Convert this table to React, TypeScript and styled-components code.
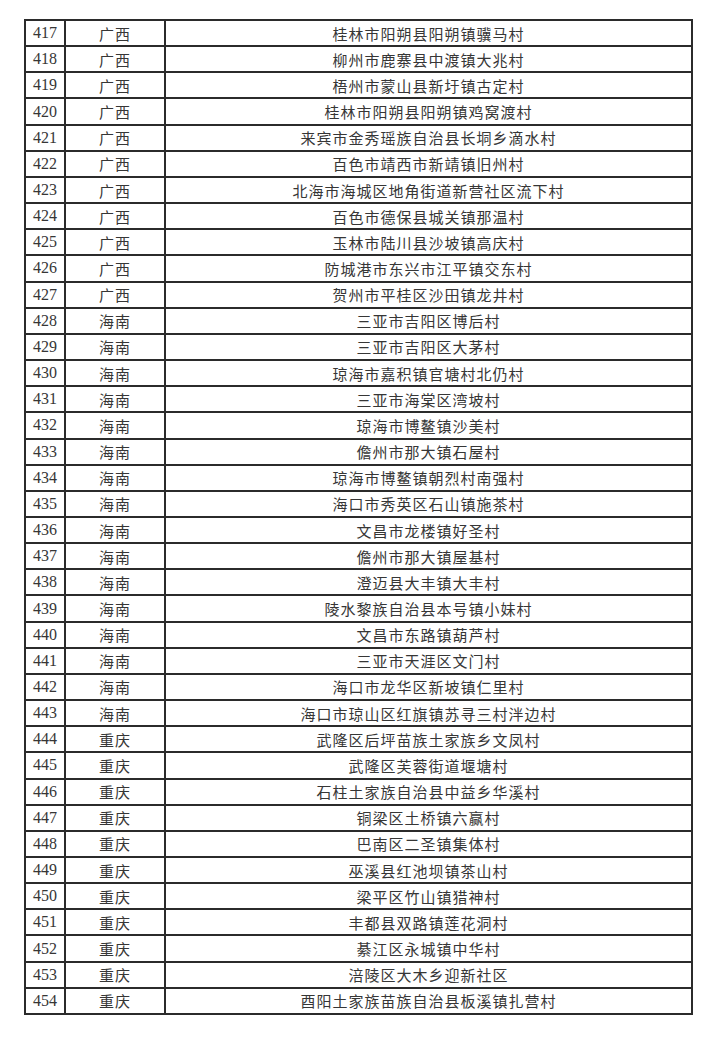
import { createGlobalStyle, styled } from "styled-components";

const GlobalStyle = createGlobalStyle`
  html, body {
    margin: 0;
    padding: 0;
    background: #fff;
  }
`;

const Page = styled.div`
  padding: 19px 0 0 24px;
  width: 720px;
  height: 1039px;
  box-sizing: border-box;
`;

const Table = styled.table`
  border-collapse: collapse;
  border: 2px solid #2b2b2b;
  table-layout: fixed;
  width: 669px;
  height: 996px;
  color: #363636;
`;

const Cell = styled.td<{ $serif?: boolean }>`
  border: 2px solid #2b2b2b;
  padding: 0;
  height: 24px;
  text-align: center;
  vertical-align: middle;
  font-family: ${(p) =>
    p.$serif
      ? `"Liberation Serif", "Noto Sans CJK SC", serif`
      : `"Noto Sans CJK SC", sans-serif`};
  font-size: ${(p) => (p.$serif ? "16px" : "15px")};
  letter-spacing: ${(p) => (p.$serif ? "0" : "1px")};
  line-height: 1;
`;

const rows: [number, string, string][] = [
  [417, "广西", "桂林市阳朔县阳朔镇骥马村"],
  [418, "广西", "柳州市鹿寨县中渡镇大兆村"],
  [419, "广西", "梧州市蒙山县新圩镇古定村"],
  [420, "广西", "桂林市阳朔县阳朔镇鸡窝渡村"],
  [421, "广西", "来宾市金秀瑶族自治县长垌乡滴水村"],
  [422, "广西", "百色市靖西市新靖镇旧州村"],
  [423, "广西", "北海市海城区地角街道新营社区流下村"],
  [424, "广西", "百色市德保县城关镇那温村"],
  [425, "广西", "玉林市陆川县沙坡镇高庆村"],
  [426, "广西", "防城港市东兴市江平镇交东村"],
  [427, "广西", "贺州市平桂区沙田镇龙井村"],
  [428, "海南", "三亚市吉阳区博后村"],
  [429, "海南", "三亚市吉阳区大茅村"],
  [430, "海南", "琼海市嘉积镇官塘村北仍村"],
  [431, "海南", "三亚市海棠区湾坡村"],
  [432, "海南", "琼海市博鳌镇沙美村"],
  [433, "海南", "儋州市那大镇石屋村"],
  [434, "海南", "琼海市博鳌镇朝烈村南强村"],
  [435, "海南", "海口市秀英区石山镇施茶村"],
  [436, "海南", "文昌市龙楼镇好圣村"],
  [437, "海南", "儋州市那大镇屋基村"],
  [438, "海南", "澄迈县大丰镇大丰村"],
  [439, "海南", "陵水黎族自治县本号镇小妹村"],
  [440, "海南", "文昌市东路镇葫芦村"],
  [441, "海南", "三亚市天涯区文门村"],
  [442, "海南", "海口市龙华区新坡镇仁里村"],
  [443, "海南", "海口市琼山区红旗镇苏寻三村泮边村"],
  [444, "重庆", "武隆区后坪苗族土家族乡文凤村"],
  [445, "重庆", "武隆区芙蓉街道堰塘村"],
  [446, "重庆", "石柱土家族自治县中益乡华溪村"],
  [447, "重庆", "铜梁区土桥镇六赢村"],
  [448, "重庆", "巴南区二圣镇集体村"],
  [449, "重庆", "巫溪县红池坝镇茶山村"],
  [450, "重庆", "梁平区竹山镇猎神村"],
  [451, "重庆", "丰都县双路镇莲花洞村"],
  [452, "重庆", "綦江区永城镇中华村"],
  [453, "重庆", "涪陵区大木乡迎新社区"],
  [454, "重庆", "酉阳土家族苗族自治县板溪镇扎营村"],
];

export default function App() {
  return (
    <Page>
      <GlobalStyle />
      <Table>
        <colgroup>
          <col style={{ width: 40 }} />
          <col style={{ width: 100 }} />
          <col />
        </colgroup>
        <tbody>
          {rows.map(([no, province, village]) => (
            <tr key={no}>
              <Cell $serif>{no}</Cell>
              <Cell>{province}</Cell>
              <Cell>{village}</Cell>
            </tr>
          ))}
        </tbody>
      </Table>
    </Page>
  );
}
